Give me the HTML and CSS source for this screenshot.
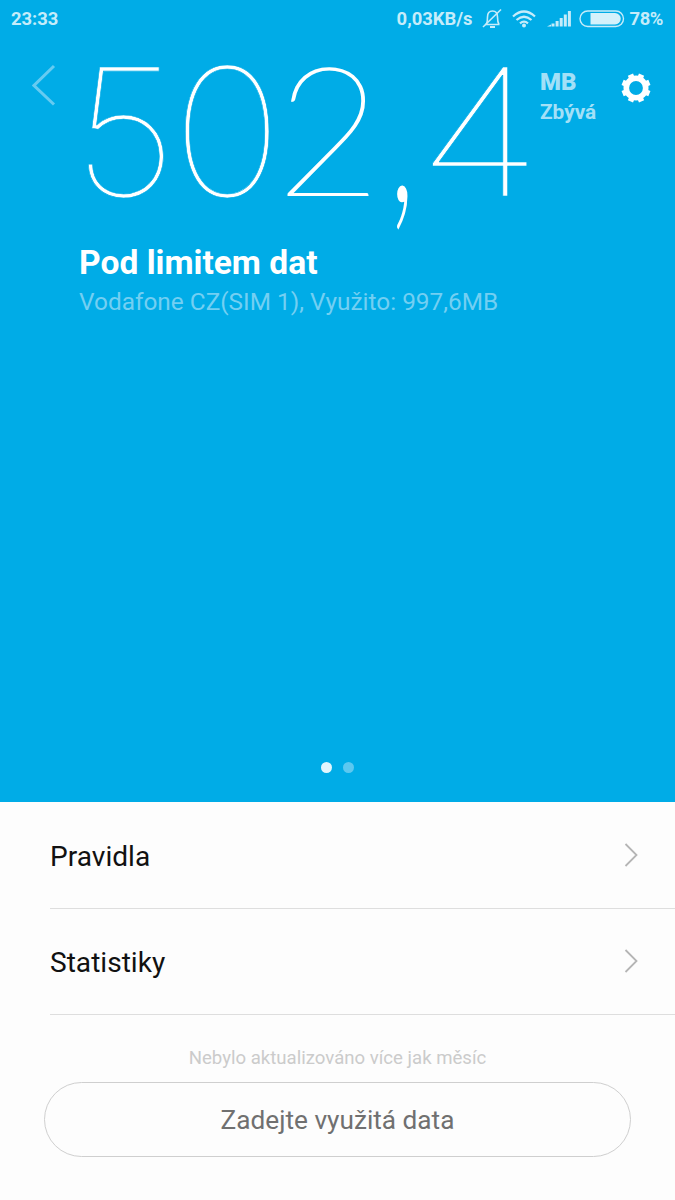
FILE: index.html
```html
<!DOCTYPE html>
<html lang="cs">
<head>
<meta charset="utf-8">
<title>Data</title>
<link rel="stylesheet" href="styles.css">
</head>
<body>
<main class="screen">
  <section class="hero">
    <header class="status">
      <span class="clock">23:33</span>
      <span class="rate">0,03KB/s</span>
      <svg class="bell" viewBox="0 0 20 22" width="20" height="22"><path d="M3 16.500h14.500M4.500 16C5.500 14 5.500 12 5.500 9C5.500 5 7.500 3 10.500 3S15.500 5 15.500 9C15.500 12 15.500 14 17 16.500"/><path d="M1 19L19 1.500"/><path d="M8 19h5" stroke-width="2"/></svg>
      <svg class="wifi" viewBox="0 0 24 18" width="24" height="18"><path d="M1 6.500Q12-3.500 23 6.500M4.500 10Q12 3.500 19.500 10M8 13.300Q12 9.800 16 13.300"/><circle cx="12" cy="15.500" r="2"/></svg>
      <svg class="signal" viewBox="0 0 24 16" width="24" height="16"><path d="M0 15.500L4 13.500V15.500ZM4.500 12.500h3v3h-3ZM8.600 10h3v5.500h-3ZM12.700 7h3v8.500h-3ZM16.800 3.500h3v12h-3ZM20.900 0h3v15.500h-3Z"/></svg>
      <svg class="battery" viewBox="0 0 46 18" width="46" height="18"><rect x="1" y="1" width="43.500" height="15.500" rx="7.750"/><path d="M11.500 3H36a5.700 5.700 0 0 1 0 11.500H11.500Z"/></svg>
      <span class="percent">78%</span>
    </header>
    <div class="summary">
      <svg class="back" viewBox="0 0 24 42" width="24" height="42"><path d="M22 2L2 21.500L22 40.500"/></svg>
      <div class="amount"><span class="five">5</span><span class="zero">0</span><span class="two">2</span><span class="comma">,</span><span class="four">4</span></div>
      <div class="unit"><b>MB</b><span>Zbývá</span></div>
      <svg class="gear" viewBox="-15 -15 30 30" width="30" height="30"><circle r="9.700"/><path transform="rotate(22.500)" d="M0-10V-14.500M0 10V14.500M-10 0H-14.500M10 0H14.500M-7-7L-10.250-10.250M7-7L10.250-10.250M-7 7L-10.250 10.250M7 7L10.250 10.250"/></svg>
    </div>
    <h1 class="title">Pod limitem dat</h1>
    <p class="detail">Vodafone CZ(SIM 1), Využito: 997,6MB</p>
    <div class="pager"><i class="dot active"></i><i class="dot"></i></div>
  </section>
  <nav class="list">
    <a class="row">Pravidla<svg class="chevron" viewBox="0 0 14 24" width="14" height="24"><path d="M1.500 1L12.500 12L1.500 23"/></svg></a>
    <a class="row">Statistiky<svg class="chevron" viewBox="0 0 14 24" width="14" height="24"><path d="M1.500 1L12.500 12L1.500 23"/></svg></a>
  </nav>
  <footer class="footer">
    <p class="note">Nebylo aktualizováno více jak měsíc</p>
    <button class="button">Zadejte využitá data</button>
  </footer>
</main>
</body>
</html>
```
FILE: styles.css
```css
* { box-sizing: border-box; }
body { margin: 0; background: #fdfdfd; font-family: Roboto, "Noto Sans", sans-serif; }
svg { display: block; flex: none; fill: none; }
p, h1 { margin: 0; }
.screen { width: 675px; height: 1200px; overflow: hidden; }
.hero { height: 802px; display: flex; flex-direction: column; background: #00ace7; }
.status { height: 38px; display: flex; align-items: center; padding: 0 12px 0 11px; font-size: 18.400px; font-weight: 700; line-height: 22px; color: #c5ecfa; }
.rate { margin-left: auto; }
.bell { margin-left: 9px; stroke: #c5ecfa; stroke-width: 1.600; }
.wifi { margin-left: 10px; stroke: #c5ecfa; stroke-width: 2.200; }
.wifi circle { fill: #c5ecfa; stroke: none; }
.signal { margin-left: 11px; fill: #c5ecfa; }
.battery { margin-left: 8px; }
.battery rect { stroke: #c5ecfa; stroke-width: 1.400; }
.battery path { fill: #d4f1fb; }
.percent { margin-left: 5px; letter-spacing: -0.400px; }
.summary { height: 205px; display: flex; align-items: flex-start; padding-left: 32px; }
.back { margin-top: 26px; stroke: #66cbf1; stroke-width: 3; }
.amount { display: flex; align-items: baseline; flex: none; margin: 27px 0 0 24px; width: 460px; font-family: Inter, Roboto, sans-serif; font-weight: 100; font-size: 177px; line-height: 134px; color: #fff; -webkit-text-stroke: 0.600px #00ace7; white-space: nowrap; }
.five { margin-left: -5px; transform: scaleX(1.040); }
.zero { transform: scaleX(1.060); }
.two { width: 106px; margin-left: -3px; font-family: Lato, Roboto, sans-serif; font-size: 181px; line-height: 100px; -webkit-text-stroke: 1.600px #fff; }
.comma { width: 42px; margin-left: -1px; text-align: center; font-family: Lato, Roboto, sans-serif; line-height: 100px; -webkit-text-stroke: 2px #fff; transform: translateY(-7px) scale(0.800, 1.300); transform-origin: 50% 82%; }
.four { margin-left: 4px; transform: scaleX(1.190); }
.unit { display: flex; flex-direction: column; flex: none; margin-top: 28px; width: 81px; color: #a3e0f7; font-size: 24px; line-height: 32px; font-weight: 700; }
.unit span { font-size: 20.800px; line-height: 28px; }
.gear { margin-top: 35px; stroke: #fff; stroke-width: 5.600; }
.title { padding-left: 79px; font-size: 33.600px; line-height: 40px; color: #fff; }
.detail { padding-left: 79px; font-size: 24.400px; line-height: 37px; color: #73cff2; }
.pager { display: flex; gap: 11px; margin: auto 0 29px 321px; }
.dot { width: 11px; height: 11px; border-radius: 50%; background: #5cc8f0; }
.active { background: #e2f6fd; }
.list { padding: 1px 0 0 50px; }
.row { display: flex; align-items: center; justify-content: space-between; height: 106px; padding: 2px 37px 0 0; border-bottom: 1px solid #dedede; font-size: 28.100px; color: #111; }
.chevron { margin-top: -3px; stroke: #b5b5b5; stroke-width: 1.800; }
.footer { padding: 29px 44px 0; text-align: center; }
.note { font-size: 18.600px; line-height: 28px; color: #cbcbcb; }
.button { display: block; width: 587px; height: 75px; margin-top: 10px; border: 1px solid #cfcfcf; border-radius: 38px; background: #fdfdfd; font: 26.200px Roboto, sans-serif; color: #707070; }
```
